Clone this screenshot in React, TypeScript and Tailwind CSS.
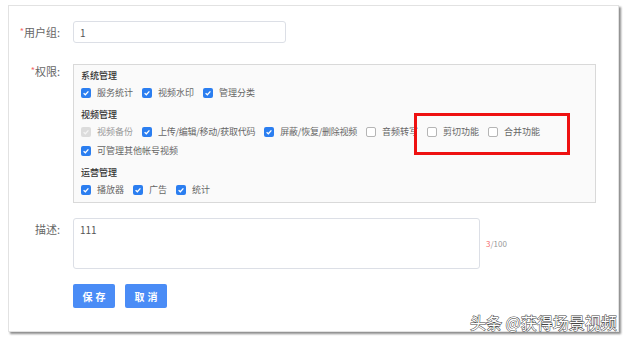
import React from 'react';

type Perm = { label: string; checked: boolean; disabled?: boolean; tight?: boolean };

const groups: { title: string; items: Perm[] }[] = [
  {
    title: '系统管理',
    items: [
      { label: '服务统计', checked: true },
      { label: '视频水印', checked: true },
      { label: '管理分类', checked: true },
    ],
  },
  {
    title: '视频管理',
    items: [
      { label: '视频备份', checked: true, disabled: true },
      { label: '上传/编辑/移动/获取代码', checked: true, tight: true },
      { label: '屏蔽/恢复/删除视频', checked: true, tight: true },
      { label: '音频转写', checked: false },
      { label: '剪切功能', checked: false },
      { label: '合并功能', checked: false },
      { label: '可管理其他帐号视频', checked: true },
    ],
  },
  {
    title: '运营管理',
    items: [
      { label: '播放器', checked: true },
      { label: '广告', checked: true },
      { label: '统计', checked: true },
    ],
  },
];

function Check({ checked, disabled }: { checked: boolean; disabled?: boolean }) {
  if (!checked) {
    return <span className="block w-[10px] h-[10px] rounded-[2px] border border-[#b5b5b5] bg-white" />;
  }
  return (
    <span
      className={`flex items-center justify-center w-[10px] h-[10px] rounded-[2px] ${
        disabled ? 'bg-[#dcdcdc]' : 'bg-[#2b7ef0]'
      }`}
    >
      <svg viewBox="0 0 10 10" className="w-[8px] h-[8px]">
        <path d="M2 5.2 L4.2 7.2 L8 3" fill="none" stroke={disabled ? '#f4f4f4' : '#fff'} strokeWidth="1.6" />
      </svg>
    </span>
  );
}

function Label({ text, required, className = '' }: { text: string; required?: boolean; className?: string }) {
  return (
    <div className={`w-[51px] shrink-0 text-right text-[11px] leading-[14px] text-[#666] ${className}`}>
      {required && <span className="text-[#f56c6c] text-[9px] align-top">*</span>}
      {text}
    </div>
  );
}

export default function App() {
  return (
    <div
      className="relative w-[628px] h-[343px] bg-white pt-[5px] pl-[8px]"
      style={{ fontFamily: '"Noto Sans CJK SC", "Noto Sans", sans-serif' }}
    >
      <div className="w-[611px] h-[327px] bg-white border border-[#e2e2e2] shadow-[2px_2px_2px_rgba(0,0,0,0.45)] pt-[15px]">
        <div className="flex items-center gap-[13px]">
          <Label text="用户组:" required />
          <div className="w-[213px] h-[22px] border border-[#dcdfe6] rounded-[3px] pl-[6px] flex items-center text-[10px] text-[#555]">
            1
          </div>
        </div>

        <div className="flex items-start gap-[13px] mt-[21px]">
          <Label text="权限:" required />
          <div className="w-[523px] border border-[#d9d9d9] bg-[#fafafa] pl-[7px] pr-[6px] pt-[5px] pb-[6px]">
            {groups.map((g, gi) => (
              <div key={g.title} className={gi === 0 ? '' : 'mt-[10px]'}>
                <div className="text-[9px] leading-[12px] font-medium text-[#333]">{g.title}</div>
                <div className="flex flex-wrap gap-y-[7px] mt-[5px]">
                  {g.items.map((it) => (
                    <div key={it.label} className="flex items-center h-[12px] mr-[9px]">
                      <Check checked={it.checked} disabled={it.disabled} />
                      <span
                        className={`ml-[6px] text-[9px] leading-[12px] ${it.tight ? 'tracking-[-0.25px]' : ''} ${
                          it.disabled ? 'text-[#999]' : 'text-[#666]'
                        }`}
                      >
                        {it.label}
                      </span>
                    </div>
                  ))}
                </div>
              </div>
            ))}
          </div>
        </div>

        <div className="flex items-start gap-[13px] mt-[15px]">
          <Label text="描述:" className="pt-[4px]" />
          <div className="w-[407px] h-[51px] border border-[#dcdfe6] rounded-[3px] pl-[6px] pt-[3px] text-[10px] text-[#555]">
            111
          </div>
          <div className="-ml-[7px] pt-[20px] text-[8px] text-[#999]">
            <span className="text-[#f56c6c]">3</span>/100
          </div>
        </div>

        <div className="flex gap-[10px] ml-[64px] mt-[15px]">
          <button className="w-[42px] h-[24px] rounded-[2px] bg-[#4a8cf6] text-white text-[10px] font-bold tracking-[3px] pl-[3px]">
            保存
          </button>
          <button className="w-[42px] h-[24px] rounded-[2px] bg-[#4a8cf6] text-white text-[10px] font-bold tracking-[3px] pl-[3px]">
            取消
          </button>
        </div>
      </div>

      <div className="absolute left-[414px] top-[113px] w-[156px] h-[42px] border-[3px] border-[#ee1111]" />

      <div className="absolute left-[470px] top-[312px] text-[16px] leading-[20px] text-white [-webkit-text-stroke:1px_#444] [paint-order:stroke_fill]">
        头条 @获得场景视频
      </div>
    </div>
  );
}
